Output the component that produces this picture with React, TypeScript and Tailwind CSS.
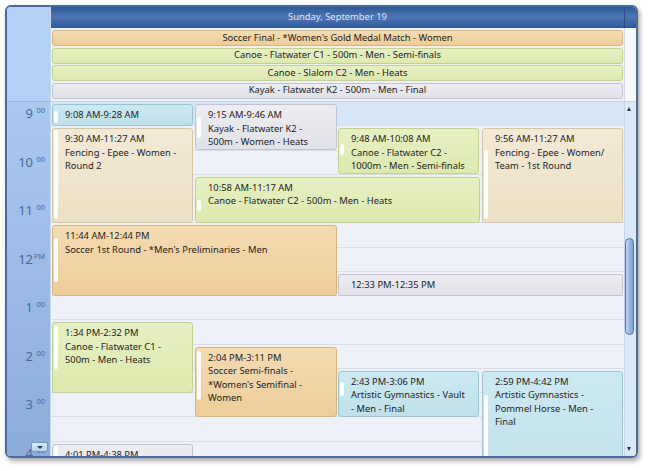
import React from "react";

const SLOT = 24.25;
const PPM = SLOT / 30;
const COL_LEFT = [1, 144, 287, 431];

type Color = "blue" | "beige" | "gray" | "green" | "orange";

const COLORS: Record<Color, string> = {
  blue: "border-[#9cc5d4] bg-[linear-gradient(180deg,#cde9f2,#bfe0ea)]",
  beige: "border-[#d4c5a6] bg-[linear-gradient(180deg,#f3ead6,#ecdfc4)]",
  gray: "border-[#c3c3ce] bg-[linear-gradient(180deg,#ececf2,#e1e1e9)]",
  green: "border-[#c2d192] bg-[linear-gradient(180deg,#e7f0c2,#dde9ae)]",
  orange: "border-[#d8b47f] bg-[linear-gradient(180deg,#f4dbb2,#eecd9a)]",
};

interface Ev {
  start: string;
  end: string;
  title?: React.ReactNode;
  col: number;
  span: number;
  color: Color;
}

const EVENTS: Ev[] = [
  { start: "9:08 AM", end: "9:28 AM", col: 0, span: 1, color: "blue" },
  { start: "9:15 AM", end: "9:46 AM", title: "Kayak - Flatwater K2 - 500m - Women - Heats", col: 1, span: 1, color: "gray" },
  { start: "9:30 AM", end: "11:27 AM", title: "Fencing - Epee - Women - Round 2", col: 0, span: 1, color: "beige" },
  { start: "9:48 AM", end: "10:08 AM", title: "Canoe - Flatwater C2 - 1000m - Men - Semi-finals", col: 2, span: 1, color: "green" },
  {
    start: "9:56 AM",
    end: "11:27 AM",
    title: (
      <>
        Fencing - Epee - Women/
        <wbr />
        Team - 1st Round
      </>
    ),
    col: 3,
    span: 1,
    color: "beige",
  },
  { start: "10:58 AM", end: "11:17 AM", title: "Canoe - Flatwater C2 - 500m - Men - Heats", col: 1, span: 2, color: "green" },
  { start: "11:44 AM", end: "12:44 PM", title: "Soccer 1st Round - *Men's Preliminaries - Men", col: 0, span: 2, color: "orange" },
  { start: "12:33 PM", end: "12:35 PM", col: 2, span: 2, color: "gray" },
  { start: "1:34 PM", end: "2:32 PM", title: "Canoe - Flatwater C1 - 500m - Men - Heats", col: 0, span: 1, color: "green" },
  { start: "2:04 PM", end: "3:11 PM", title: "Soccer Semi-finals - *Women's Semifinal - Women", col: 1, span: 1, color: "orange" },
  { start: "2:43 PM", end: "3:06 PM", title: "Artistic Gymnastics - Vault - Men - Final", col: 2, span: 1, color: "blue" },
  { start: "2:59 PM", end: "4:42 PM", title: "Artistic Gymnastics - Pommel Horse - Men - Final", col: 3, span: 1, color: "blue" },
  { start: "4:01 PM", end: "4:38 PM", title: "Fencing - Foil - Men - Final", col: 0, span: 1, color: "gray" },
];

const ALL_DAY: { title: string; color: Color }[] = [
  { title: "Soccer Final - *Women's Gold Medal Match - Women", color: "orange" },
  { title: "Canoe - Flatwater C1 - 500m - Men - Semi-finals", color: "green" },
  { title: "Canoe - Slalom C2 - Men - Heats", color: "green" },
  { title: "Kayak - Flatwater K2 - 500m - Men - Final", color: "gray" },
];

const HOURS: { h: string; sup: string }[] = [
  { h: "9", sup: "00" },
  { h: "10", sup: "00" },
  { h: "11", sup: "00" },
  { h: "12", sup: "PM" },
  { h: "1", sup: "00" },
  { h: "2", sup: "00" },
  { h: "3", sup: "00" },
  { h: "4", sup: "00" },
];

function toMin(t: string) {
  const [hm, ap] = t.split(" ");
  let [h, m] = hm.split(":").map(Number);
  if (ap === "PM" && h !== 12) h += 12;
  return h * 60 + m;
}

function EventBox({ e }: { e: Ev }) {
  const s = toMin(e.start) - 540;
  const en = toMin(e.end) - 540;
  const slot0 = Math.floor(s / 30);
  const slot1 = Math.ceil(en / 30);
  const top = slot0 * SLOT + 2;
  const height = (slot1 - slot0) * SLOT - 2.5;
  const left = COL_LEFT[e.col];
  const width = e.span === 2 ? 285 : e.col === 1 ? 142 : 141;
  const barTop = Math.max(s * PPM + 3 - top - 1, 1);
  const barBot = Math.min(en * PPM - 1.5 - top - 1, height - 4);
  const barH = barBot - barTop;
  const multi = slot1 - slot0 > 1;
  return (
    <div
      className={`absolute overflow-hidden rounded-[3px] border ${COLORS[e.color]}`}
      style={{ top, height, left, width }}
    >
      {barH > 2 && (
        <div
          className="absolute left-[1px] w-[4px] rounded-[2px] bg-white"
          style={{ top: barTop, height: barH }}
        />
      )}
      <div className="pl-[12px] pr-[11px] pt-[3px] text-[9.4px] leading-[13.5px] text-[#1e1e1e]">
        <div>
          {e.start}-{e.end}
        </div>
        {multi && e.title && <div>{e.title}</div>}
      </div>
    </div>
  );
}

export default function App() {
  return (
    <div className="h-[471px] w-[650px] bg-white pl-[5px] pt-[5px] font-['Noto_Sans','Open_Sans',sans-serif]">
      <div className="flex h-[453px] w-[633px] overflow-hidden rounded-[6px] border-2 border-[#4a6b9c] shadow-[2px_3px_5px_rgba(0,0,0,0.35)]">
        {/* Time ruler */}
        <div className="relative flex w-[43px] flex-col">
          <div className="h-[95px] shrink-0 border-b border-[#98b6df] bg-[#b3d0f5]" />
          <div className="flex-1 overflow-hidden bg-[linear-gradient(180deg,#abc8ef,#8cacd9)]">
            {HOURS.map((hr) => (
              <div key={hr.h} className="flex h-[48.5px] items-start justify-end pr-[5px] pt-[5px] text-[#4a6a9b]">
                <span className="text-[13px] leading-none">{hr.h}</span>
                <span className="w-[12px] text-right text-[7.5px] leading-none">{hr.sup}</span>
              </div>
            ))}
          </div>
          <div className="absolute bottom-[4px] left-[24px] flex h-[10px] w-[17px] items-center justify-center rounded-[2px] border border-[#7598c9] bg-[linear-gradient(180deg,#dceaf9,#b6cff0)]">
            <div className="h-0 w-0 border-l-[3px] border-r-[3px] border-t-[3px] border-l-transparent border-r-transparent border-t-[#1f3a66]" />
          </div>
        </div>
        <div className="w-px bg-[#c9d9ef]" />
        {/* Main column */}
        <div className="flex flex-1 flex-col">
          {/* Header */}
          <div className="flex h-[21px] shrink-0 bg-[linear-gradient(180deg,#2e5796_0%,#4d76b5_45%,#4870b0_60%,#2f5898_100%)]">
            <div className="flex flex-1 items-center justify-center text-[9.4px] text-[#dce7f8]">
              Sunday, September 19
            </div>
            <div className="w-[12px] border-l border-[#2a4c83]" />
          </div>
          {/* All day */}
          <div className="flex h-[74px] shrink-0 border-b border-[#c8d2e0]">
            <div className="flex w-[573px] flex-col gap-[1.5px] bg-[#eef2f8] px-px pt-[2px]">
              {ALL_DAY.map((a) => (
                <div
                  key={a.title}
                  className={`flex h-[16px] items-center justify-center rounded-[3px] border text-[9.4px] text-[#1e1e1e] ${COLORS[a.color]}`}
                >
                  {a.title}
                </div>
              ))}
            </div>
            <div className="flex-1 border-l border-[#d3dbe7] bg-[#f6f8fc]" />
          </div>
          {/* Time grid */}
          <div className="flex flex-1 overflow-hidden">
            <div className="relative w-[573px] overflow-hidden bg-[#eef2f8]">
              {Array.from({ length: 16 }).map((_, i) => (
                <div
                  key={i}
                  className={`h-[24.25px] border-b border-[#d8dfe9] ${i === 0 ? "bg-[#d6e6f8]" : ""}`}
                />
              ))}
              {EVENTS.map((e) => (
                <EventBox key={e.start} e={e} />
              ))}
            </div>
            {/* Scrollbar */}
            <div className="flex flex-1 flex-col items-start border-l border-[#c6d5e8] bg-[#dce8f5]">
              <div className="ml-[2px] mt-[5px] h-0 w-0 border-b-[4px] border-l-[2.5px] border-r-[2.5px] border-b-[#1f3a66] border-l-transparent border-r-transparent" />
              <div className="mt-[127px] h-[97px] w-[9px] rounded-[5px] border border-[#4f74ac] bg-[linear-gradient(90deg,#c4d8f3,#94b5e4_55%,#7da1d6)]" />
              <div className="flex-1" />
              <div className="mb-[5px] ml-[2px] h-0 w-0 border-l-[2.5px] border-r-[2.5px] border-t-[4px] border-l-transparent border-r-transparent border-t-[#1f3a66]" />
            </div>
          </div>
        </div>
      </div>
    </div>
  );
}
